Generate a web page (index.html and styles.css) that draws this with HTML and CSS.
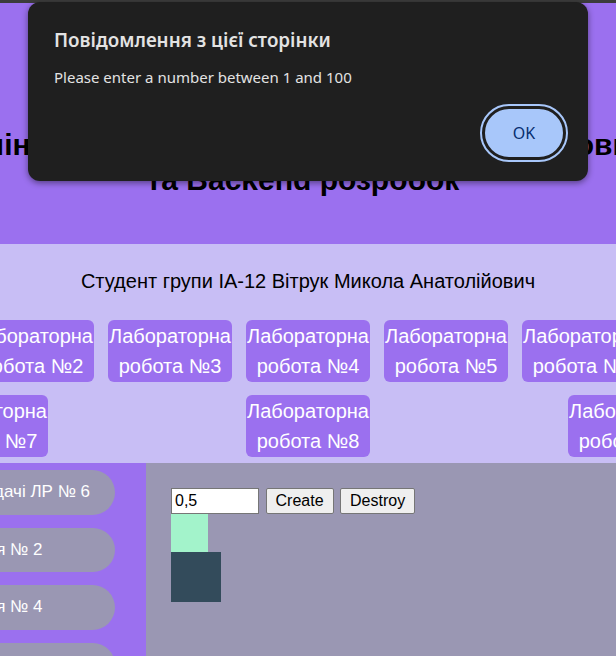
FILE: index.html
```html
<!DOCTYPE html>
<html lang="uk">
<head>
<meta charset="utf-8">
<title>Лабораторні роботи</title>
<link rel="stylesheet" href="styles.css">
</head>
<body>
<div class="chrome-bar"></div>
<div class="page">
  <header class="header">
    <h1 class="title">Звіти з дисципліни Веб-технології та веб-дизайн – основи Web/Frontend<br>та Backend розробок</h1>
  </header>
  <section class="band">
    <p class="student">Студент групи ІА-12 Вітрук Микола Анатолійович</p>
    <nav class="labs">
      <a class="lab" href="#">Лабораторна робота №1</a>
      <a class="lab" href="#">Лабораторна робота №2</a>
      <a class="lab" href="#">Лабораторна робота №3</a>
      <a class="lab" href="#">Лабораторна робота №4</a>
      <a class="lab" href="#">Лабораторна робота №5</a>
      <a class="lab" href="#">Лабораторна робота №6</a>
      <a class="lab" href="#">Лабораторна робота №6а</a>
      <a class="lab" href="#">Лабораторна робота №7</a>
      <a class="lab" href="#">Лабораторна робота №8</a>
      <a class="lab" href="#">Лабораторна робота №9</a>
    </nav>
  </section>
  <div class="content">
    <aside class="sidebar">
      <a class="pill" href="#">Завдання до здачі ЛР № 6</a>
      <a class="pill" href="#">Завдання № 2</a>
      <a class="pill" href="#">Завдання № 4</a>
      <a class="pill" href="#">Завдання № 6</a>
    </aside>
    <main class="main">
      <div class="controls">
        <input class="num" type="text" value="0,5">
        <button class="btn" type="button">Create</button>
        <button class="btn" type="button">Destroy</button>
      </div>
      <div class="sq sq-mint"></div>
      <div class="sq sq-dark"></div>
    </main>
  </div>
</div>
<div class="dialog" role="alertdialog">
  <div class="dialog-title">Повідомлення з цієї сторінки</div>
  <div class="dialog-msg">Please enter a number between 1 and 100</div>
  <div class="dialog-actions">
    <button class="ok" type="button">OK</button>
  </div>
</div>
</body>
</html>
```

FILE: styles.css
```css
html, body {
  margin: 0;
  padding: 0;
  overflow: hidden;
  height: 100%;
}
body {
  font-family: "Liberation Sans", Arial, sans-serif;
  background: #9a97b3;
  position: relative;
}
.chrome-bar {
  height: 3px;
  background: #3c3c3c;
}
.page {
  width: 1000px;
  margin-left: calc(50% - 500px);
}
.header {
  background: #9b70ef;
  height: 241px;
  box-sizing: border-box;
  padding-top: 124px;
}
.title {
  margin: 0 0 0 -405px;
  width: 1800px;
  text-align: center;
  white-space: nowrap;
  font-size: 30px;
  line-height: 35px;
  font-weight: bold;
  color: #000;
}
.band {
  background: #c8bef5;
  padding: 25px 0 6px;
}
.student {
  margin: 0 0 27px;
  text-align: center;
  font-size: 20px;
  line-height: 24px;
  color: #000;
}
.labs {
  width: 966px;
  margin: 0 auto;
  display: flex;
  flex-wrap: wrap;
  justify-content: space-around;
  row-gap: 13px;
}
.lab {
  width: 124px;
  height: 62px;
  margin: 0 7px;
  box-sizing: border-box;
  padding: 1px 0;
  background: #9b70ef;
  border-radius: 6px;
  color: #fff;
  text-decoration: none;
  font-size: 20px;
  line-height: 30px;
  text-align: center;
}
.content {
  display: grid;
  grid-template-columns: 338px 1fr;
  min-height: 400px;
}
.sidebar {
  background: #9b70ef;
  padding: 7px 31px 0 49px;
  display: flex;
  flex-direction: column;
  gap: 13px;
}
.pill {
  height: 44.5px;
  border-radius: 23px;
  background: #9a97b3;
  color: #fff;
  text-decoration: none;
  font-size: 17px;
  display: flex;
  align-items: center;
  justify-content: center;
}
.main {
  background: #9a97b3;
  padding: 25px;
}
.controls {
  display: flex;
  gap: 6.5px;
  align-items: center;
}
.num {
  width: 88px;
  height: 26px;
  box-sizing: border-box;
  border: 1px solid #767676;
  padding: 1px 3px;
  font-family: "Liberation Sans", Arial, sans-serif;
  font-size: 16px;
  background: #fff;
  color: #000;
  margin: 0;
}
.btn {
  height: 26px;
  box-sizing: border-box;
  border: 1px solid #767676;
  border-radius: 2px;
  background: #efefef;
  padding: 0 9px;
  font-family: "Liberation Sans", Arial, sans-serif;
  font-size: 16px;
  color: #000;
  margin: 0;
}
.sq-mint {
  width: 37px;
  height: 38px;
  background: #a3f3cb;
}
.sq-dark {
  width: 50px;
  height: 50px;
  background: #334b5b;
}
.dialog {
  position: absolute;
  top: 2px;
  left: 28px;
  width: 560px;
  height: 179px;
  box-sizing: border-box;
  background: #1f1f1f;
  border-radius: 12px;
  box-shadow: 0 2px 6px rgba(0, 0, 0, 0.45);
  padding: 26px 22px 0 26px;
  font-family: "Noto Sans", "Open Sans", sans-serif;
  color: #e3e3e3;
}
.dialog-title {
  font-size: 18.8px;
  line-height: 24px;
  font-weight: 600;
}
.dialog-msg {
  margin-top: 15px;
  font-size: 15px;
  line-height: 20px;
}
.dialog-actions {
  margin-top: 19px;
  display: flex;
  justify-content: flex-end;
}
.ok {
  width: 84px;
  height: 54px;
  box-sizing: border-box;
  border: 3px solid #1f1f1f;
  outline: 2px solid #a8c7fa;
  border-radius: 27px;
  background: #a8c7fa;
  color: #062e6f;
  font-family: "Noto Sans", "Open Sans", sans-serif;
  font-size: 16px;
  padding: 0;
}
```
